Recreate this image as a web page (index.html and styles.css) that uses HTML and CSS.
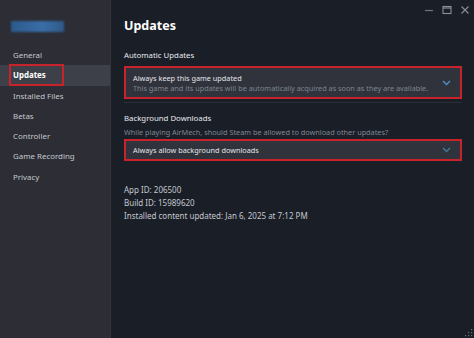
FILE: index.html
```html
<!DOCTYPE html>
<html lang="en">
<head>
    <meta charset="UTF-8">
    <meta name="viewport" content="width=device-width, initial-scale=1.0">
    <title>Properties - Updates</title>
    <link rel="stylesheet" href="styles.css">
</head>
<body>
    <div class="window">
        <!-- Sidebar -->
        <aside class="sidebar">
            <div class="game-banner"></div>
            <nav class="nav">
                <div class="nav-item">General</div>
                <div class="nav-item active"><span class="mark">Updates</span></div>
                <div class="nav-item">Installed Files</div>
                <div class="nav-item">Betas</div>
                <div class="nav-item">Controller</div>
                <div class="nav-item">Game Recording</div>
                <div class="nav-item">Privacy</div>
            </nav>
        </aside>

        <!-- Main panel -->
        <main class="content">
            <h1>Updates</h1>

            <section class="group">
                <div class="group-title">Automatic Updates</div>
                <div class="dropdown tall">
                    <div class="dropdown-text">
                        <div class="dropdown-value">Always keep this game updated</div>
                        <div class="dropdown-desc">This game and its updates will be automatically acquired as soon as they are available.</div>
                    </div>
                    <svg class="chevron" width="9" height="6" viewBox="0 0 9 6"><path d="M1 1l3.5 3.5L8 1" fill="none" stroke="#4e8fc6" stroke-width="1.4"/></svg>
                </div>
            </section>

            <div class="separator"></div>

            <section class="group">
                <div class="group-title">Background Downloads</div>
                <div class="group-desc">While playing AirMech, should Steam be allowed to download other updates?</div>
                <div class="dropdown">
                    <div class="dropdown-text">
                        <div class="dropdown-value">Always allow background downloads</div>
                    </div>
                    <svg class="chevron" width="9" height="6" viewBox="0 0 9 6"><path d="M1 1l3.5 3.5L8 1" fill="none" stroke="#3f7a98" stroke-width="1.4"/></svg>
                </div>
            </section>

            <div class="info">
                <div>App ID: 206500</div>
                <div>Build ID: 15989620</div>
                <div>Installed content updated: Jan 6, 2025 at 7:12 PM</div>
            </div>
        </main>

        <!-- Window controls -->
        <div class="window-controls">
            <svg width="10" height="10" viewBox="0 0 10 10"><path d="M1 5.5h8" stroke="#6f747d" stroke-width="1.2"/></svg>
            <svg width="10" height="10" viewBox="0 0 10 10"><rect x="1" y="1.5" width="8" height="7" fill="none" stroke="#8a8f98" stroke-width="1.1"/><path d="M1 3h8" stroke="#8a8f98" stroke-width="1.2"/></svg>
            <svg width="10" height="10" viewBox="0 0 10 10"><path d="M1.5 1.5l7 7M8.5 1.5l-7 7" stroke="#8a8f98" stroke-width="1.1"/></svg>
        </div>

        <svg class="resize-grip" width="8" height="8" viewBox="0 0 8 8">
            <rect x="6" y="0" width="1.2" height="1.2" fill="#6a707a"/>
            <rect x="3" y="3" width="1.2" height="1.2" fill="#6a707a"/>
            <rect x="6" y="3" width="1.2" height="1.2" fill="#6a707a"/>
            <rect x="0" y="6" width="1.2" height="1.2" fill="#6a707a"/>
            <rect x="3" y="6" width="1.2" height="1.2" fill="#6a707a"/>
            <rect x="6" y="6" width="1.2" height="1.2" fill="#6a707a"/>
        </svg>
    </div>
</body>
</html>
```

FILE: styles.css
```css
/* General Styles */
body {
    margin: 0;
    padding: 0;
    font-family: 'Noto Sans', 'Liberation Sans', sans-serif;
    background-color: #1a1e26;
    color: #dfe3e8;
}

.window {
    position: relative;
    display: flex;
    width: 474px;
    height: 338px;
    overflow: hidden;
}

/* Sidebar */
.sidebar {
    width: 110px;
    flex-shrink: 0;
    background-color: #2c2d35;
    border-right: 1px solid #34363f;
}

.game-banner {
    width: 53px;
    height: 11px;
    margin: 21px 0 0 11px;
    background: linear-gradient(90deg, #2c5a8c, #3a6ea8 60%, #2f5a88);
    filter: blur(0.8px);
}

.nav {
    margin-top: 13px;
}

.nav-item {
    height: 20.3px;
    line-height: 20.3px;
    padding-left: 13px;
    font-size: 7.9px;
    color: #c4c8cf;
}

.nav-item.active {
    background-color: #3d3f49;
    color: #fff;
    font-weight: 700;
}

.nav-item .mark {
    display: inline-block;
    box-sizing: border-box;
    width: 55px;
    height: 22px;
    line-height: 18px;
    margin: -1px 0 0 -4px;
    padding-left: 2px;
    border: 2px solid #c8232b;
    vertical-align: top;
}

/* Main panel */
.content {
    flex: 1;
    padding: 14px 12px 0 13px;
}

h1 {
    margin: 0 0 11px;
    font-size: 12.5px;
    line-height: 24px;
    font-weight: 700;
    color: #fff;
}

.group-title {
    font-size: 7.8px;
    line-height: 12px;
    color: #e6e9ee;
    margin-bottom: 5px;
}

.group + .separator + .group .group-title {
    margin-bottom: 3px;
}

.group-desc {
    font-size: 7.3px;
    line-height: 12px;
    color: #7f8794;
    margin-top: -1px;
    margin-bottom: 1px;
}

.dropdown {
    display: flex;
    align-items: center;
    box-sizing: border-box;
    height: 22px;
    padding: 0 9px 0 7px;
    background-color: #30333c;
    border: 2px solid #c8232b;
}

.dropdown.tall {
    height: 33px;
}

.dropdown-text {
    flex: 1;
}

.dropdown-value {
    font-size: 7.3px;
    line-height: 10px;
    color: #e2e5ea;
}

.dropdown-desc {
    font-size: 7.3px;
    line-height: 10px;
    color: #7c8490;
}

.chevron {
    flex-shrink: 0;
}

.separator {
    height: 1px;
    margin: 3px 0 9px;
    background-color: #2b2f38;
}

.info {
    margin-top: 22px;
    font-size: 8px;
    line-height: 13px;
    color: #c4c8cf;
}

/* Window chrome */
.window-controls {
    position: absolute;
    top: 5px;
    right: 4px;
    display: flex;
    gap: 8px;
}

.resize-grip {
    position: absolute;
    right: 1px;
    bottom: 1px;
}
```
